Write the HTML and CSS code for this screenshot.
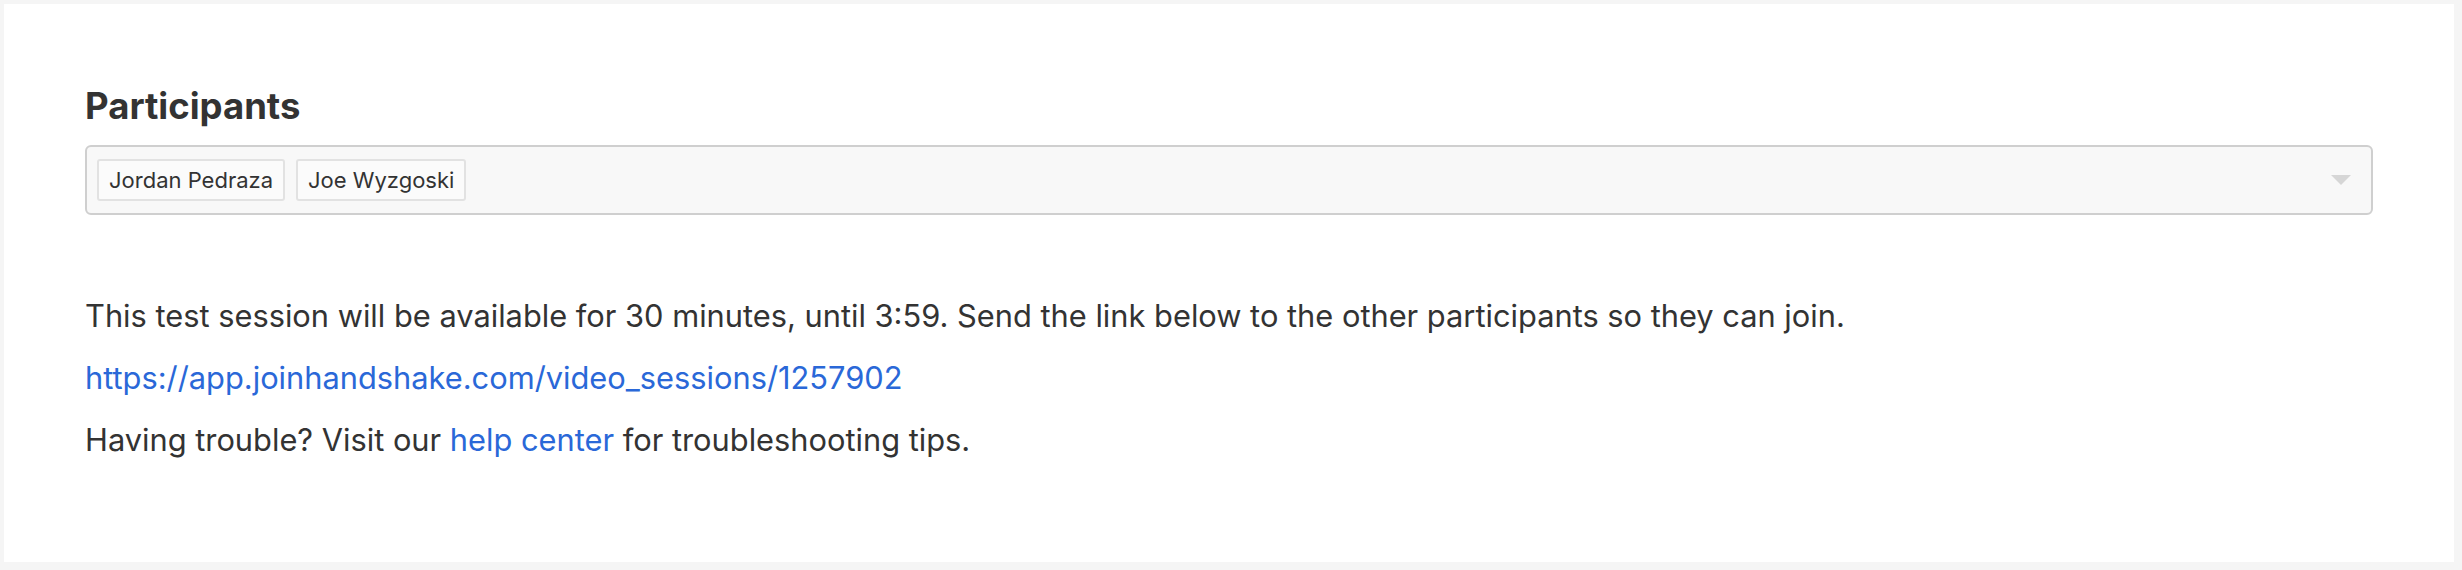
FILE: index.html
```html
<!DOCTYPE html>
<html>
<head>
<meta charset="utf-8">
<link rel="stylesheet" href="styles.css">
</head>
<body>
<div class="card">
  <h2 class="title">Participants</h2>
  <div class="select">
    <div class="chips">
      <span class="chip">Jordan Pedraza</span>
      <span class="chip">Joe Wyzgoski</span>
    </div>
    <span class="caret"></span>
  </div>
  <div class="info">
    <p class="line">This test session will be available for 30 minutes, until 3:59. Send the link below to the other participants so they can join.</p>
    <p class="line"><a class="link" href="#">https://app.joinhandshake.com/video_sessions/1257902</a></p>
    <p class="line">Having trouble? Visit our <a class="link" href="#">help center</a> for troubleshooting tips.</p>
  </div>
</div>
</body>
</html>
```
FILE: styles.css
```css
html, body {
  margin: 0;
  padding: 0;
}
body {
  background: #f5f5f5;
  padding: 4px 8px 8px 4px;
  font-family: Inter, "Liberation Sans", sans-serif;
  color: #333333;
}
.card {
  background: #ffffff;
  height: 558px;
  box-sizing: border-box;
  padding: 78px 81px 0 81px;
}
.title {
  margin: 0 0 15px 0;
  font-size: 36.5px;
  line-height: 48px;
  font-weight: 700;
  color: #333333;
}
.select {
  height: 70px;
  box-sizing: border-box;
  border: 2px solid #cfcfcf;
  border-radius: 6px;
  background: #f8f8f8;
  display: flex;
  align-items: center;
  justify-content: space-between;
  padding: 0 20px 0 10px;
}
.chips {
  display: flex;
  gap: 11px;
}
.chip {
  height: 42px;
  box-sizing: border-box;
  border: 2px solid #e2e2e2;
  border-radius: 3px;
  background: #fbfbfb;
  font-size: 22px;
  line-height: 38px;
  padding: 0 10px;
  color: #333333;
}
.caret {
  width: 0;
  height: 0;
  border-left: 10px solid transparent;
  border-right: 10px solid transparent;
  border-top: 10px solid #d6d6d6;
}
.info {
  padding-top: 80px;
}
.line {
  margin: 0 0 20px 0;
  font-size: 30.8px;
  line-height: 42px;
}
.link {
  color: #2a68d8;
  text-decoration: none;
}
```
